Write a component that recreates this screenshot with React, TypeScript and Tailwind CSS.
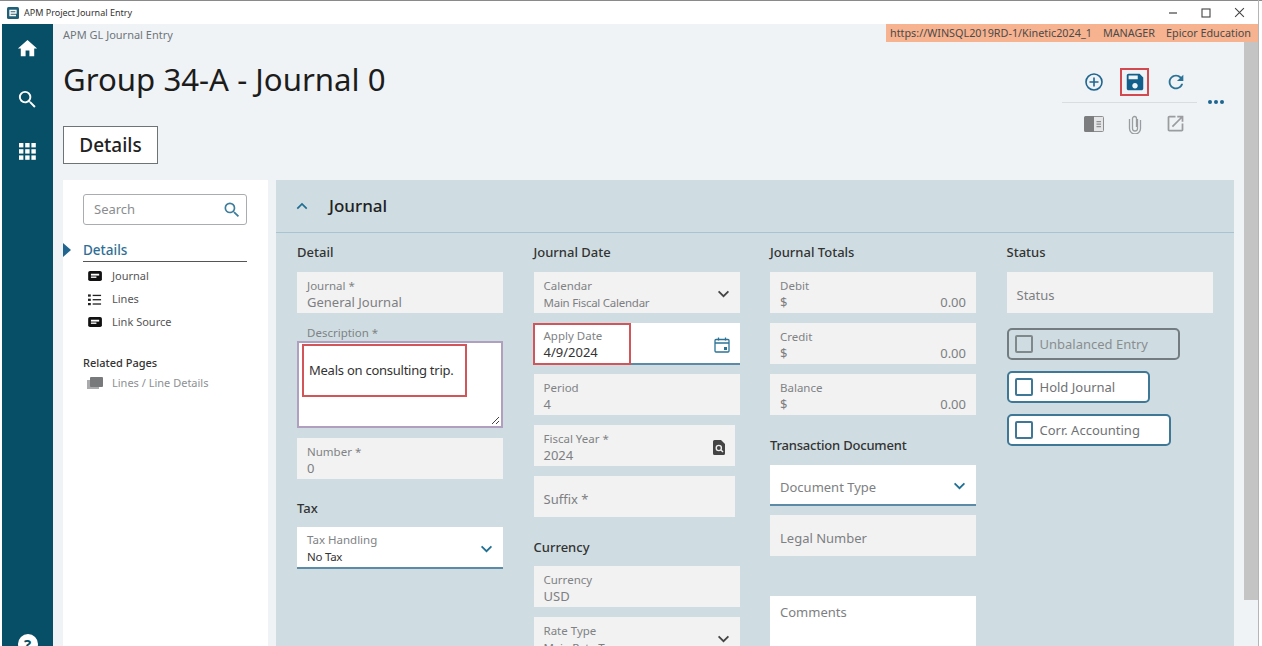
import React from "react";

const Ic = ({ d, c = "", s = 24 }: { d: string; c?: string; s?: number }) => (
  <svg viewBox="0 0 24 24" width={s} height={s} className={c} fill="currentColor"><path d={d} /></svg>
);

const Chevron = ({ c = "text-[#1f6f93]" }: { c?: string }) => (
  <svg viewBox="0 0 14 9" width="13" height="8" className={c} fill="none" stroke="currentColor" strokeWidth="2"><path d="M1.5 1.5 7 7l5.5-5.5" /></svg>
);

const Card = () => (
  <svg viewBox="0 0 16 12" width="15" height="11" className="text-[#111]"><rect width="15" height="11" rx="2" fill="currentColor" /><rect x="3" y="3" width="9" height="2" fill="#fff" /><rect x="3" y="6" width="6" height="1.5" fill="#fff" /></svg>
);

const ListI = () => (
  <svg viewBox="0 0 15 12" width="14" height="12" className="text-[#222]" fill="currentColor"><rect x="0" y="0" width="3" height="2.4" /><rect x="0" y="4.6" width="3" height="2.4" /><rect x="0" y="9.2" width="3" height="2.4" /><rect x="5" y="0.4" width="9" height="1.4" /><rect x="5" y="5" width="9" height="1.4" /><rect x="5" y="9.6" width="9" height="1.4" /></svg>
);

function Field({ label, value, white, dark, right, small, w, h }: { label: string; value?: string; white?: boolean; dark?: boolean; right?: React.ReactNode; small?: boolean; w?: string; h?: string }) {
  return (
    <div className={`relative ${h ?? "h-[41px]"} shrink-0 pl-[10px] pr-[5px] flex flex-col justify-center ${value !== undefined ? "pt-[3px]" : "pt-[6px]"} ${white ? "bg-white border-b-2 border-[#5b8ba6]" : "bg-[#f2f2f2]"} ${w ?? "w-full"}`}>
      {value !== undefined ? (
        <>
          <div className="text-[11.5px] leading-[16px] text-[#808285]">{label}</div>
          <div className={`${small ? "text-[11.5px] tracking-[-0.25px]" : "text-[13px]"} leading-[17px] ${dark ? "text-[#333]" : "text-[#7d7f82]"}`}>{value}</div>
        </>
      ) : (
        <div className="text-[13px] leading-[17px] text-[#7d7f82]">{label}</div>
      )}
      {right && <div className="absolute right-[10px] top-[3px] bottom-0 flex items-center">{right}</div>}
    </div>
  );
}

function Money({ label }: { label: string }) {
  return (
    <div className="h-[41px] w-full shrink-0 bg-[#f2f2f2] pl-[10px] pr-[10px] pt-[3px] flex flex-col justify-center">
      <div className="text-[11.5px] leading-[16px] text-[#808285]">{label}</div>
      <div className="flex justify-between text-[13px] leading-[17px] text-[#7d7f82]"><span>$</span><span>0.00</span></div>
    </div>
  );
}

const H = ({ children, c = "" }: { children: React.ReactNode; c?: string }) => (
  <div className={`text-[13px] leading-[18px] font-medium text-[#333] ${c}`}>{children}</div>
);

function Check({ label, w, gray }: { label: string; w: string; gray?: boolean }) {
  return (
    <div className={`h-[32px] ${w} rounded-[5px] border-2 flex items-center pl-[6px] gap-[7px] ${gray ? "border-[#737d81]" : "border-[#3e7896] bg-white"}`}>
      <div className={`w-[18px] h-[18px] rounded-[2px] border-2 ${gray ? "border-[#7f888b]" : "border-[#3e7896]"}`} />
      <span className={`text-[13px] pt-[2px] ${gray ? "text-[#8a8d90]" : "text-[#6f7275]"}`}>{label}</span>
    </div>
  );
}

export default function App() {
  return (
    <div className="relative w-[1262px] h-[646px] overflow-hidden bg-white flex flex-col font-['Noto_Sans',sans-serif]">
      <div className="h-[24px] shrink-0 bg-white border-t border-[#8a8a8a] flex items-center pl-[7px] pr-[8px]">
        <svg viewBox="0 0 12 12" width="12" height="12" className="shrink-0"><rect width="12" height="12" rx="1.5" fill="#1f6077" /><path d="M3 6h6V3.5H3v5h6" fill="none" stroke="#fff" strokeWidth="1.3" /></svg>
        <span className="ml-[5px] text-[9px] text-[#333]">APM Project Journal Entry</span>
        <div className="ml-auto flex items-center gap-[23px] pr-[9px] text-[#444]">
          <svg width="10" height="10" viewBox="0 0 10 10"><path d="M1 5h8" stroke="currentColor" strokeWidth="1.2" /></svg>
          <svg width="10" height="10" viewBox="0 0 10 10"><rect x="1" y="1" width="8" height="8" fill="none" stroke="currentColor" strokeWidth="1.1" /></svg>
          <svg width="11" height="11" viewBox="0 0 10 10"><path d="M1 1l8 8M9 1 1 9" stroke="currentColor" strokeWidth="1" /></svg>
        </div>
      </div>

      <div className="flex-1 flex min-h-0 pl-[2px] pr-[4px]">
        <div className="w-[51px] shrink-0 bg-[#064f66] text-white flex flex-col items-center pt-[13px]">
          <Ic d="M10 20v-6h4v6h5v-8h3L12 3 2 12h3v8z" s={23} />
          <Ic d="M15.5 14h-.79l-.28-.27A6.47 6.47 0 0 0 16 9.5 6.5 6.5 0 1 0 9.5 16c1.61 0 3.09-.59 4.23-1.57l.27.28v.79l5 4.99L20.49 19l-4.99-5zm-6 0C7.01 14 5 11.99 5 9.5S7.01 5 9.5 5 14 7.01 14 9.5 11.99 14 9.5 14z" s={23} c="mt-[28px]" />
          <svg viewBox="0 0 17 17" width="17" height="17" fill="currentColor" className="mt-[32px]">
            <rect x="0" y="0" width="4.4" height="4.4" /><rect x="6.2" y="0" width="4.4" height="4.4" /><rect x="12.4" y="0" width="4.4" height="4.4" />
            <rect x="0" y="6.2" width="4.4" height="4.4" /><rect x="6.2" y="6.2" width="4.4" height="4.4" /><rect x="12.4" y="6.2" width="4.4" height="4.4" />
            <rect x="0" y="12.4" width="4.4" height="4.4" /><rect x="6.2" y="12.4" width="4.4" height="4.4" /><rect x="12.4" y="12.4" width="4.4" height="4.4" />
          </svg>
          <div className="mt-auto mb-[-8px] w-[20px] h-[20px] shrink-0 rounded-full bg-white text-[#064f66] text-[15px] leading-[20px] font-bold text-center">?</div>
        </div>

        <div className="flex-1 min-w-0 bg-[#eff3f6] flex">
          <div className="flex-1 min-w-0 flex flex-col pl-[10px]">
            <div className="h-[156px] shrink-0 flex justify-between">
              <div>
                <div className="text-[11px] leading-[16px] text-[#70757a] mt-[3px]">APM GL Journal Entry</div>
                <h1 className="text-[31.2px] leading-[40px] text-[#1c1c1c] mt-[16px]">Group 34-A - Journal 0</h1>
                <div className="mt-[27px] w-[95px] h-[38px] bg-white border border-[#6d7478] flex items-center justify-center text-[19px] font-medium text-[#222]">Details</div>
              </div>
              <div className="mr-[20px] mt-[44px] flex items-start">
                <div className="w-[135px]">
                  <div className="h-[35px] border-b border-[#d8dde0] flex items-start justify-between pl-[22px] pr-[10px] text-[#1f6590]">
                    <svg viewBox="0 0 20 20" width="20" height="20" className="mt-[4px]" fill="none" stroke="currentColor" strokeWidth="1.6"><circle cx="10" cy="10" r="8" /><path d="M10 5.5v9M5.5 10h9" /></svg>
                    <Ic d="M17 3H5c-1.11 0-2 .9-2 2v14c0 1.1.89 2 2 2h14c1.1 0 2-.9 2-2V7l-4-4zm-5 16c-1.66 0-3-1.34-3-3s1.34-3 3-3 3 1.34 3 3-1.34 3-3 3zm3-10H5V5h10v4z" s={22} c="mt-[3px] text-[#135f8c]" />
                    <Ic d="M17.65 6.35C16.2 4.9 14.21 4 12 4c-4.42 0-7.99 3.58-7.99 8s3.57 8 7.99 8c3.73 0 6.84-2.55 7.73-6h-2.08c-.82 2.33-3.04 4-5.65 4-3.31 0-6-2.69-6-6s2.69-6 6-6c1.66 0 3.14.69 4.22 1.78L13 11h7V4l-2.35 2.35z" s={22} c="mt-[3px] text-[#2b7396]" />
                  </div>
                  <div className="flex items-center justify-between pl-[22px] pr-[11px] pt-[10px] text-[#9a9c9e]">
                    <svg viewBox="0 0 20 16" width="20" height="16"><path d="M0 1.5A1.5 1.5 0 0 1 1.5 0H10v16H1.5A1.5 1.5 0 0 1 0 14.5z" fill="#7b7d7f" /><path d="M10 .5h8.5a1 1 0 0 1 1 1v13a1 1 0 0 1-1 1H10" fill="#e3e5e6" stroke="#8d8f91" /><path d="M12.5 5h4.5v1.2h-4.5zM12.5 7.5h4.5v1.2h-4.5zM12.5 10h4.5v1.2h-4.5z" fill="#8d8f91" /></svg>
                    <svg viewBox="0 0 14 20" width="14" height="20" fill="none" stroke="currentColor" strokeWidth="1.3"><path d="M9.5 5v9.5a2.5 2.5 0 0 1-5 0V4.5a2 2 0 0 1 4 0V13" /><path d="M12.5 6v8.5a5.5 5.5 0 0 1-11 0V5" /></svg>
                    <Ic d="M19 19H5V5h7V3H5c-1.11 0-2 .9-2 2v14c0 1.1.89 2 2 2h14c1.1 0 2-.9 2-2v-7h-2v7zM14 3v2h3.59l-9.83 9.83 1.41 1.41L19 6.41V10h2V3h-7z" s={21} />
                  </div>
                </div>
                <div className="ml-[11px] mt-[32px] flex gap-[2px]">
                  <span className="w-[4px] h-[4px] rounded-full bg-[#1f6590]" />
                  <span className="w-[4px] h-[4px] rounded-full bg-[#1f6590]" />
                  <span className="w-[4px] h-[4px] rounded-full bg-[#1f6590]" />
                </div>
              </div>
            </div>

            <div className="flex-1 min-h-0 flex gap-[8px] pr-[10px]">
              <div className="relative w-[205px] shrink-0 bg-white pl-[20px] pr-[21px] pt-[14px]">
                <div className="h-[31px] border border-[#a9adb0] rounded-[3px] flex items-center justify-between pl-[10px] pr-[4px]">
                  <span className="text-[13px] text-[#8a8d90] pt-[1px]">Search</span>
                  <Ic d="M15.5 14h-.79l-.28-.27A6.47 6.47 0 0 0 16 9.5 6.5 6.5 0 1 0 9.5 16c1.61 0 3.09-.59 4.23-1.57l.27.28v.79l5 4.99L20.49 19l-4.99-5zm-6 0C7.01 14 5 11.99 5 9.5S7.01 5 9.5 5 14 7.01 14 9.5 11.99 14 9.5 14z" s={20} c="text-[#3f7d9c]" />
                </div>
                <div className="mt-[15px] h-[22px] border-b border-[#555] text-[13.5px] leading-[20px] font-medium text-[#2f6f96]">Details</div>
                <div className="absolute left-0 top-[63px] w-0 h-0 border-y-[7px] border-y-transparent border-l-[8px] border-l-[#1f6590]" />
                <div className="mt-[3px] pl-[5px] text-[11px] text-[#555]">
                  <div className="h-[23px] flex items-center gap-[9px]"><span className="w-[15px]"><Card /></span>Journal</div>
                  <div className="h-[23px] flex items-center gap-[9px]"><span className="w-[15px]"><ListI /></span>Lines</div>
                  <div className="h-[23px] flex items-center gap-[9px]"><span className="w-[15px]"><Card /></span>Link Source</div>
                </div>
                <div className="mt-[21px] text-[11px] leading-[16px] font-medium text-[#333]">Related Pages</div>
                <div className="mt-[4px] pl-[4px] flex items-center gap-[9px] text-[11px] text-[#8d9093]">
                  <svg viewBox="0 0 16 13" width="16" height="13"><rect x="0" y="3" width="12" height="9" fill="#a9abad" /><rect x="3" y="0" width="13" height="10" rx="1" fill="#77797b" /></svg>
                  Lines / Line Details
                </div>
              </div>

              <div className="flex-1 min-w-0 bg-[#cfdde2] overflow-hidden">
                <div className="h-[53px] border-b border-[#a8c4d2] flex items-center pl-[20px]">
                  <svg viewBox="0 0 14 9" width="12" height="8" className="text-[#1f6f93]" fill="none" stroke="currentColor" strokeWidth="2"><path d="M1.5 7.5 7 2l5.5 5.5" /></svg>
                  <span className="ml-[21px] text-[17px] font-medium text-[#222]">Journal</span>
                </div>
                <div className="grid grid-cols-[206px_206px_206px_206px] gap-x-[30.5px] pl-[21px] pt-[10px]">
                  <div className="flex flex-col">
                    <H c="mb-[11px]">Detail</H>
                    <Field label="Journal *" value="General Journal" />
                    <div className="text-[11.5px] leading-[16px] text-[#808285] mt-[12px] pl-[10px]">Description *</div>
                    <div className="relative h-[87px] shrink-0 bg-white border-2 border-[#b19fc0] pl-[10px] pt-[18px] text-[13px] tracking-[-0.25px] leading-[18px] text-[#333]">
                      Meals on consulting trip.
                      <svg width="9" height="9" viewBox="0 0 9 9" className="absolute right-[1px] bottom-[1px] text-[#444]" fill="none" stroke="currentColor" strokeWidth="1"><path d="M1 8 8 1M5 8l3-3" /></svg>
                    </div>
                    <div className="h-[10px] shrink-0" />
                    <Field label="Number *" value="0" />
                    <H c="mt-[20px] mb-[10px]">Tax</H>
                    <Field label="Tax Handling" value="No Tax" white dark small h="h-[42px]" right={<Chevron />} />
                  </div>

                  <div className="flex flex-col gap-[10px]">
                    <H c="mb-[1px]">Journal Date</H>
                    <Field label="Calendar" value="Main Fiscal Calendar" small right={<Chevron c="text-[#444]" />} />
                    <div className="mb-[-1px]">
                      <Field label="Apply Date" value="4/9/2024" white dark h="h-[42px]" right={
                        <svg viewBox="0 0 16 16" width="16" height="16" className="text-[#2b7396]" fill="none" stroke="currentColor" strokeWidth="1.3"><rect x="1" y="2.5" width="14" height="12.5" rx="1" /><path d="M1 6h14M4.5 0.5v3M11.5 0.5v3" /><rect x="10" y="10" width="3" height="3" fill="currentColor" stroke="none" /></svg>
                      } />
                    </div>
                    <Field label="Period" value="4" />
                    <Field label="Fiscal Year *" value="2024" w="w-[201px]" right={
                      <svg viewBox="0 0 12 15" width="12" height="15"><path d="M1.5 0H8l4 4v9.5a1.5 1.5 0 0 1-1.5 1.5h-9A1.5 1.5 0 0 1 0 13.5v-12A1.5 1.5 0 0 1 1.5 0z" fill="#444" /><circle cx="5.8" cy="8" r="2.6" fill="none" stroke="#eee" strokeWidth="1.4" /><path d="M8 10l2 2" stroke="#eee" strokeWidth="1.4" /></svg>
                    } />
                    <Field label="Suffix *" w="w-[201px]" />
                    <H c="mt-[11px]">Currency</H>
                    <Field label="Currency" value="USD" />
                    <Field label="Rate Type" value="Main Rate Type" small right={<Chevron c="text-[#444]" />} />
                  </div>

                  <div className="flex flex-col gap-[10px]">
                    <H c="mb-[1px]">Journal Totals</H>
                    <Money label="Debit" />
                    <Money label="Credit" />
                    <Money label="Balance" />
                    <H c="mt-[11px] mb-[1px] tracking-[-0.2px]">Transaction Document</H>
                    <Field label="Document Type" white right={<Chevron />} />
                    <div className="mt-[-1px]"><Field label="Legal Number" /></div>
                    <div className="mt-[30px] h-[80px] shrink-0 bg-white pl-[10px] pt-[7px] text-[13px] text-[#7d7f82]">Comments</div>
                  </div>

                  <div className="flex flex-col items-start">
                    <H c="mb-[11px]">Status</H>
                    <Field label="Status" />
                    <div className="h-[15px]" />
                    <Check label="Unbalanced Entry" w="w-[173px]" gray />
                    <div className="h-[11px]" />
                    <Check label="Hold Journal" w="w-[143px]" />
                    <div className="h-[11px]" />
                    <Check label="Corr. Accounting" w="w-[164px]" />
                  </div>
                </div>
              </div>
            </div>
          </div>
          <div className="w-[14px] shrink-0 pt-[18px]">
            <div className="h-[558px] bg-[#c4c4c4]" />
          </div>
        </div>
      </div>

      <div className="absolute left-[886px] top-[24px] w-[372px] h-[18px] bg-[#f7b28f] flex items-center gap-[11px] pl-[4px] text-[10.8px] text-[#4a4a4a] whitespace-nowrap overflow-hidden">
        <span>https://WINSQL2019RD-1/Kinetic2024_1</span><span>MANAGER</span><span>Epicor Education</span>
      </div>
      <div className="absolute left-[1258px] top-0 w-px h-full bg-[#b5b5b5]" />
      <div className="absolute left-[1120px] top-[68px] w-[29px] h-[28px] border-2 border-[#d24a4f]" />
      <div className="absolute left-[302px] top-[344px] w-[165px] h-[53px] border-2 border-[#d2555a]" />
      <div className="absolute left-[533px] top-[323px] w-[98px] h-[42px] border-2 border-[#d2555a]" />
    </div>
  );
}
